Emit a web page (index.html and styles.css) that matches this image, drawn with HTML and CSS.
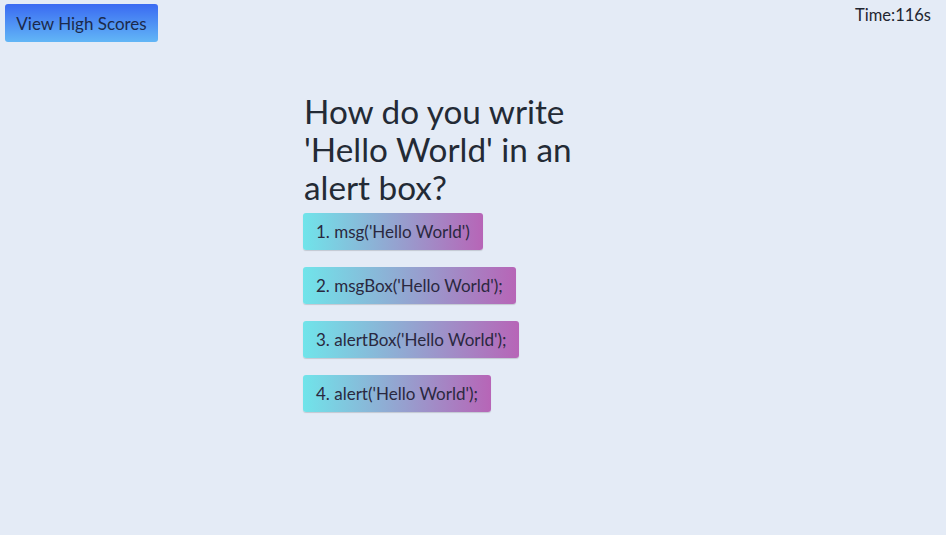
FILE: index.html
```html
<!DOCTYPE html>
<html>
<head>
<meta charset="utf-8">
<link rel="stylesheet" href="styles.css">
</head>
<body>
<header class="top">
  <button class="scores-btn">View High Scores</button>
  <div class="timer">Time:116s</div>
</header>
<main class="quiz">
  <h1 class="question">How do you write 'Hello World' in an alert box?</h1>
  <div class="answers">
    <button class="answer">1. msg('Hello World')</button>
    <button class="answer">2. msgBox('Hello World');</button>
    <button class="answer">3. alertBox('Hello World');</button>
    <button class="answer">4. alert('Hello World');</button>
  </div>
</main>
</body>
</html>
```
FILE: styles.css
```css
html, body {
  margin: 0;
  padding: 0;
}
body {
  background: #e4ebf6;
  font-family: Lato, "Open Sans", sans-serif;
  color: #222a36;
  width: 946px;
  height: 535px;
  overflow: hidden;
}
.top {
  display: flex;
  justify-content: space-between;
  align-items: flex-start;
  padding: 4px 15px 0 5px;
}
.scores-btn {
  font-family: inherit;
  font-size: 17px;
  color: #1b2a4c;
  width: 153px;
  height: 38px;
  border: none;
  border-radius: 3px;
  background: linear-gradient(to bottom, #3a6af2, #62b6f6);
  padding: 0;
}
.timer {
  font-size: 16.5px;
  margin-top: 1px;
  color: #1f2530;
}
.quiz {
  margin-left: 303px;
  width: 290px;
  margin-top: 50px;
}
.question {
  font-weight: normal;
  font-size: 33.3px;
  line-height: 38px;
  margin: 0 0 7px 1px;
  color: #232a35;
}
.answers {
  display: flex;
  flex-direction: column;
  align-items: flex-start;
  gap: 17px;
}
.answer {
  font-family: inherit;
  font-size: 17px;
  color: #2a2840;
  height: 37px;
  padding: 0 13px 0 13px;
  border: none;
  border-radius: 3px;
  background: linear-gradient(to right, #70e4ea, #b765b7);
  box-shadow: 0 1px 1px rgba(0,0,0,0.15);
}
```
